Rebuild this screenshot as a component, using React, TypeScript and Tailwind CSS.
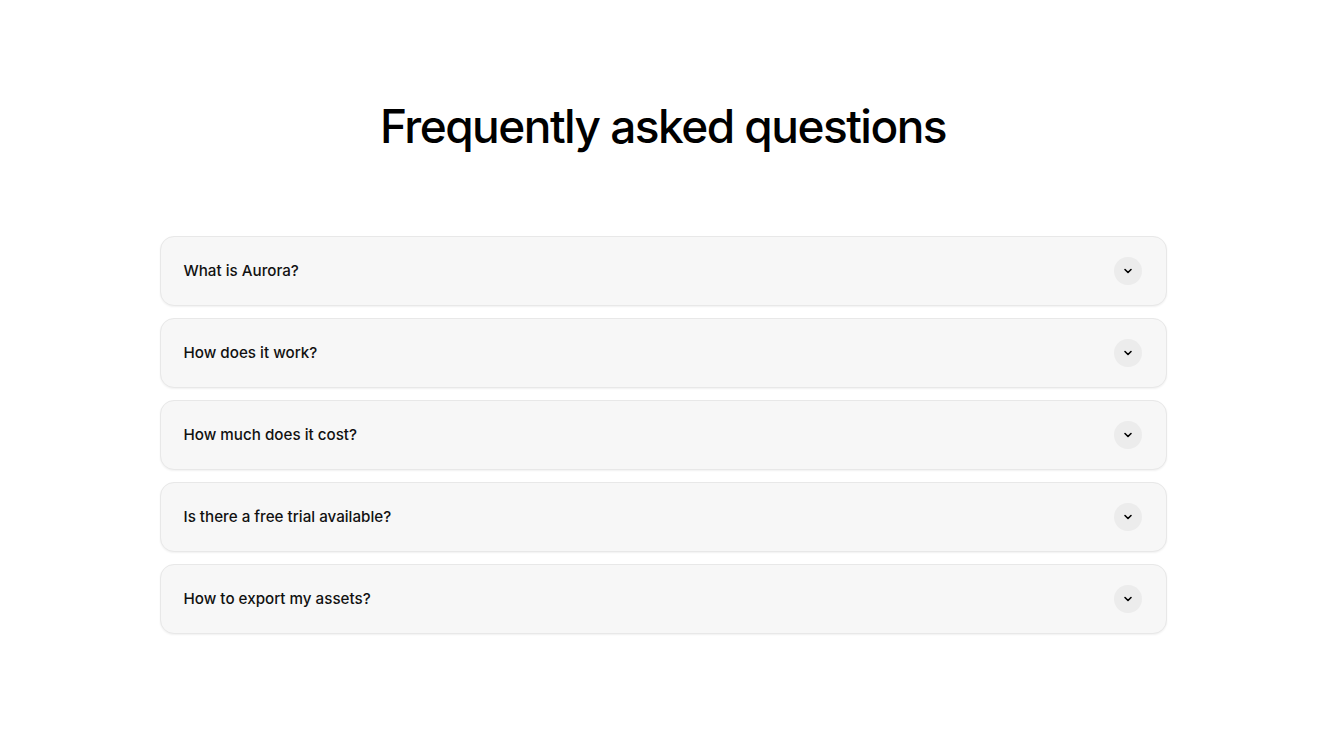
import React from 'react';

const faqs = [
  'What is Aurora?',
  'How does it work?',
  'How much does it cost?',
  'Is there a free trial available?',
  'How to export my assets?',
];

const Chevron = () => (
  <svg width="12" height="12" viewBox="0 0 24 24" fill="none" stroke="currentColor" strokeWidth="3.2" strokeLinecap="round" strokeLinejoin="round">
    <path d="M6 9l6 6 6-6" />
  </svg>
);

export default function App() {
  return (
    <div className="min-h-screen bg-white font-['Inter',sans-serif] text-black">
      <div className="pt-[96px] flex flex-col items-center">
        <h1 className="text-[46px] leading-[60px] font-medium tracking-[-0.033em]">Frequently asked questions</h1>
        <div className="mt-[80px] w-[1007px] flex flex-col gap-[12px]">
          {faqs.map((q) => (
            <div
              key={q}
              className="h-[70px] rounded-[14px] border border-[#e8e8e8] bg-[#f7f7f7] shadow-[0_1px_2px_rgba(0,0,0,0.06)] pl-[23px] pr-6 flex items-center justify-between"
            >
              <span className="text-[15.2px] font-medium text-[#111]">{q}</span>
              <span className="w-7 h-7 rounded-full bg-[#ececec] flex items-center justify-center text-black">
                <Chevron />
              </span>
            </div>
          ))}
        </div>
      </div>
    </div>
  );
}
